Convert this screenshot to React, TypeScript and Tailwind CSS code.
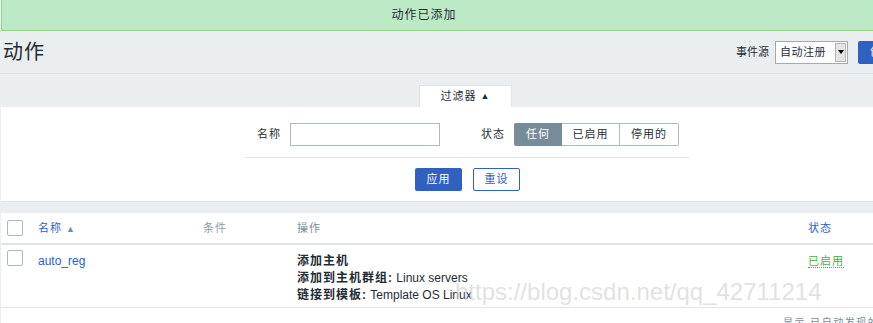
import React from 'react';

const font = "font-['Liberation_Sans','Noto_Sans_CJK_SC',sans-serif]";

function Checkbox() {
  return <div className="w-[16px] h-[16px] border border-[#acbbc2] rounded-[2px] bg-white" />;
}

export default function App() {
  return (
    <div className={`relative w-[873px] h-[323px] overflow-hidden bg-[#ebeef0] text-[#1f2c33] text-[12px] ${font}`}>
      {/* 消息 */}
      <div className="ml-px h-[31px] w-[900px] border border-t-0 border-[#8fd68f] bg-[#bdeac6] flex items-center justify-center pr-[54px]">
        <span className="text-[#1f2c33] text-[12px] tracking-[1px]">动作已添加</span>
      </div>

      {/* 标题 */}
      <div className="flex items-center h-[43px] border-b border-[#dde1e4]">
        <h1 className="ml-[3px] text-[20px] leading-none tracking-[1px] font-normal">动作</h1>
        <div className="ml-auto flex items-center">
          <span className="text-[11px] mr-[6px]">事件源</span>
          <div className="flex items-center w-[73px] h-[23px] border border-[#a9a9a9] bg-white">
            <span className="pl-[4px] text-[11px] tracking-[0.5px] flex-1">自动注册</span>
            <div className="w-[11px] h-[19px] mr-[1px] bg-[#e4e4e4] border border-[#b5b5b5] flex items-center justify-center">
              <div className="w-0 h-0 border-l-[3px] border-r-[3px] border-t-[4px] border-l-transparent border-r-transparent border-t-black" />
            </div>
          </div>
          <div className="ml-[10px] mr-[-70px] w-[85px] h-[23px] bg-[#3060c0] rounded-[2px] text-white text-[12px] flex items-center pl-[12px]">创建动作</div>
        </div>
      </div>

      {/* 过滤器标签 */}
      <div className="mt-[11px] ml-[419px] w-[93px] h-[22px] bg-white border border-b-0 border-[#dfe4e7] flex items-center justify-center text-[11px] tracking-[1px]">
        过滤器 <span className="ml-[4px] text-[9px]">▲</span>
      </div>

      {/* 过滤器面板 */}
      <div className="ml-px h-[95px] bg-white border-b border-[#dfe4e7]">
        <div className="ml-[244px] w-[444px] pt-[16px]">
          <div className="flex items-center h-[23px]">
            <span className="ml-[12px] text-[11px] tracking-[1px] text-[#1f2c33]">名称</span>
            <div className="ml-[9px] w-[150px] h-[23px] border border-[#acbbc2]" />
            <span className="ml-[41px] text-[11px] tracking-[1px]">状态</span>
            <div className="ml-[9px] flex h-[23px] text-[11px] tracking-[1px]">
              <div className="w-[48px] bg-[#768d99] text-white flex items-center justify-center rounded-l-[2px]">任何</div>
              <div className="w-[58px] border border-l-0 border-[#acbbc2] flex items-center justify-center">已启用</div>
              <div className="w-[59px] border border-l-0 border-[#acbbc2] rounded-r-[2px] flex items-center justify-center">停用的</div>
            </div>
          </div>
          <div className="mt-[11px] border-b border-[#e3e6e8]" />
          <div className="mt-[10px] flex justify-center gap-[11px] pl-[1px]">
            <div className="w-[47px] h-[23px] bg-[#3060c0] rounded-[2px] text-white text-[11px] tracking-[1px] flex items-center justify-center">应用</div>
            <div className="w-[47px] h-[23px] border border-[#3060c0] rounded-[2px] text-[#3060c0] text-[11px] tracking-[1px] flex items-center justify-center">重设</div>
          </div>
        </div>
      </div>

      {/* 列表 */}
      <div className="ml-px mt-[11px] bg-white h-[120px]">
        <div className="grid grid-cols-[37px_165px_94px_511px_1fr] items-center h-[32px] border-b-2 border-[#dfe4e7] text-[11px] tracking-[1px]">
          <div className="pl-[6px]"><Checkbox /></div>
          <div className="text-[#2a62c4]">名称 <span className="text-[#768d99] text-[9px]">▲</span></div>
          <div className="text-[#8e9ea6]">条件</div>
          <div className="text-[#768d99]">操作</div>
          <div className="text-[#2a62c4]">状态</div>
        </div>
        <div className="grid grid-cols-[37px_165px_94px_511px_1fr] items-start h-[63px] pt-[5px] border-b border-[#e3e6e8]">
          <div className="pl-[6px]"><Checkbox /></div>
          <div className="mt-[3px] text-[#1e63c8] leading-[17px]">auto_reg</div>
          <div />
          <div className="mt-[3px] leading-[17px]">
            <div><b className="tracking-[1px]">添加主机</b></div>
            <div><b className="tracking-[1px]">添加到主机群组:</b> Linux servers</div>
            <div><b className="tracking-[1px]">链接到模板:</b> Template OS Linux</div>
          </div>
          <div className="mt-[3px] leading-[17px]">
            <span className="text-[#3db43d] text-[11px] tracking-[1px] border-b border-dotted border-[#3db43d]">已启用</span>
          </div>
        </div>
        <div className="pt-[7px] pl-[782px] text-[10px] text-[#768d99] tracking-[1.5px] whitespace-nowrap">显示 已自动发现的 1中的1</div>
      </div>

      {/* 水印 */}
      <div className="absolute left-[455px] top-[280px] text-[24px] leading-none text-[#d4d4d4]/70 whitespace-nowrap font-['Liberation_Sans',sans-serif] pointer-events-none">
        https://blog.csdn.net/qq_42711214
      </div>
    </div>
  );
}
